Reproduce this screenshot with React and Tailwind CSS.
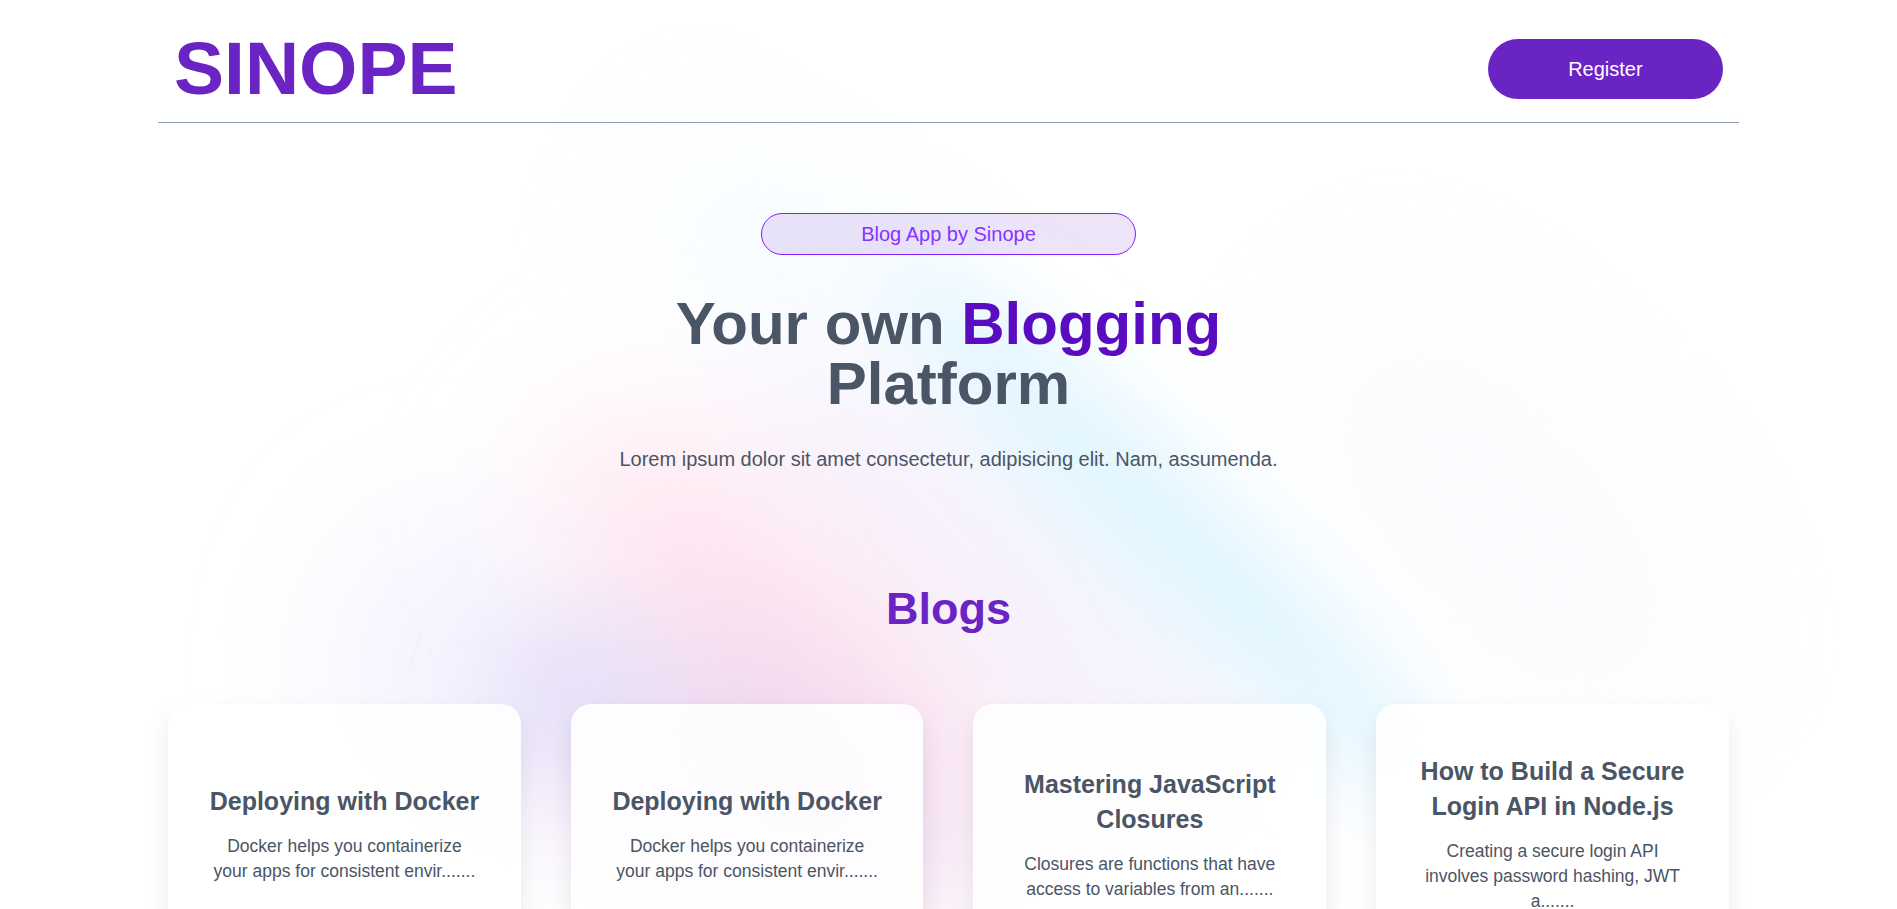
const posts = [
  { id: 1, title: "Deploying with Docker", excerpt: "Docker helps you containerize your apps for consistent envir......." },
  { id: 2, title: "Deploying with Docker", excerpt: "Docker helps you containerize your apps for consistent envir......." },
  { id: 3, title: "Mastering JavaScript Closures", excerpt: "Closures are functions that have access to variables from an......." },
  { id: 4, title: "How to Build a Secure Login API in Node.js", excerpt: "Creating a secure login API involves password hashing, JWT a......." },
];

function Aurora() {
  return (
    <svg
      aria-hidden="true"
      className="pointer-events-none absolute inset-x-0 top-0 -z-10 w-full"
      viewBox="0 0 1897 1000"
    >
      <defs>
        <filter id="soft" x="-100%" y="-100%" width="300%" height="300%">
          <feGaussianBlur stdDeviation="70" />
        </filter>
        <filter id="mid" x="-100%" y="-100%" width="300%" height="300%">
          <feGaussianBlur stdDeviation="42" />
        </filter>
      </defs>
      <ellipse cx="460" cy="670" rx="125" ry="150" fill="#efeffe" opacity="0.8" filter="url(#soft)" />
      <ellipse cx="1500" cy="520" rx="110" ry="240" fill="#fafafe" opacity="0.8" transform="rotate(-42 1500 520)" filter="url(#soft)" />
      <ellipse cx="780" cy="260" rx="130" ry="60" fill="#f1faff" opacity="0.8" transform="rotate(30 780 260)" filter="url(#soft)" />
      <ellipse cx="1010" cy="610" rx="350" ry="130" fill="#f6f2fd" transform="rotate(44 1010 610)" filter="url(#soft)" />
      <ellipse cx="1165" cy="530" rx="390" ry="62" fill="#e0f5ff" transform="rotate(44 1165 530)" filter="url(#mid)" />
      <ellipse cx="770" cy="640" rx="290" ry="115" fill="#ffe5f0" transform="rotate(46 770 640)" filter="url(#soft)" />
      <ellipse cx="750" cy="780" rx="220" ry="130" fill="#e9d2ef" opacity="0.8" transform="rotate(30 750 780)" filter="url(#soft)" />
      <ellipse cx="575" cy="700" rx="80" ry="80" fill="#e5e0f9" opacity="0.85" filter="url(#mid)" />
    </svg>
  );
}

function PostCard({ title, excerpt }) {
  return (
    <article className="flex min-h-[260px] flex-col justify-center gap-3 rounded-[20px] bg-white/90 px-8 py-5 text-center shadow-[0_10px_24px_rgba(0,0,0,0.08)]">
      <h3 className="text-xl font-bold">{title}</h3>
      <p className="text-sm">{excerpt}</p>
    </article>
  );
}

export default function App() {
  return (
    <div className="relative isolate min-h-screen overflow-hidden bg-white pt-3 pb-10 font-['Liberation_Sans',Arial,sans-serif] text-base text-gray-600">
      <style>{"html { font-size: 20px; }"}</style>
      <Aurora />
      <div className="mx-auto w-10/12">
        <header className="flex items-center justify-between border-b border-slate-400 p-[16px]">
          <a href="#" className="text-6xl font-bold text-[#6b24c4]">SINOPE</a>
          <button type="button" className="h-[60px] w-[235px] rounded-full bg-[#6b24c4] text-white">
            Register
          </button>
        </header>
        <main>
          <section className="flex flex-col items-center pt-[90px] text-center">
            <p className="w-[375px] rounded-full border border-violet-600 bg-[#6b24c4]/12 py-1 text-[#8833fe]">
              Blog App by Sinope
            </p>
            <h1 className="mt-[39px] max-w-[600px] text-5xl font-bold">
              Your own <span className="text-[#5a0cc0]">Blogging</span> Platform
            </h1>
            <p className="mt-6">
              Lorem ipsum dolor sit amet consectetur, adipisicing elit. Nam, assumenda.
            </p>
          </section>
          <section className="px-2 pt-[110px]">
            <h2 className="text-center text-4xl font-bold text-[#6b24c4]">Blogs</h2>
            <div className="mt-[70px] grid grid-cols-4 gap-[50px]">
              {posts.map((post) => (
                <PostCard key={post.id} title={post.title} excerpt={post.excerpt} />
              ))}
            </div>
          </section>
        </main>
      </div>
    </div>
  );
}
